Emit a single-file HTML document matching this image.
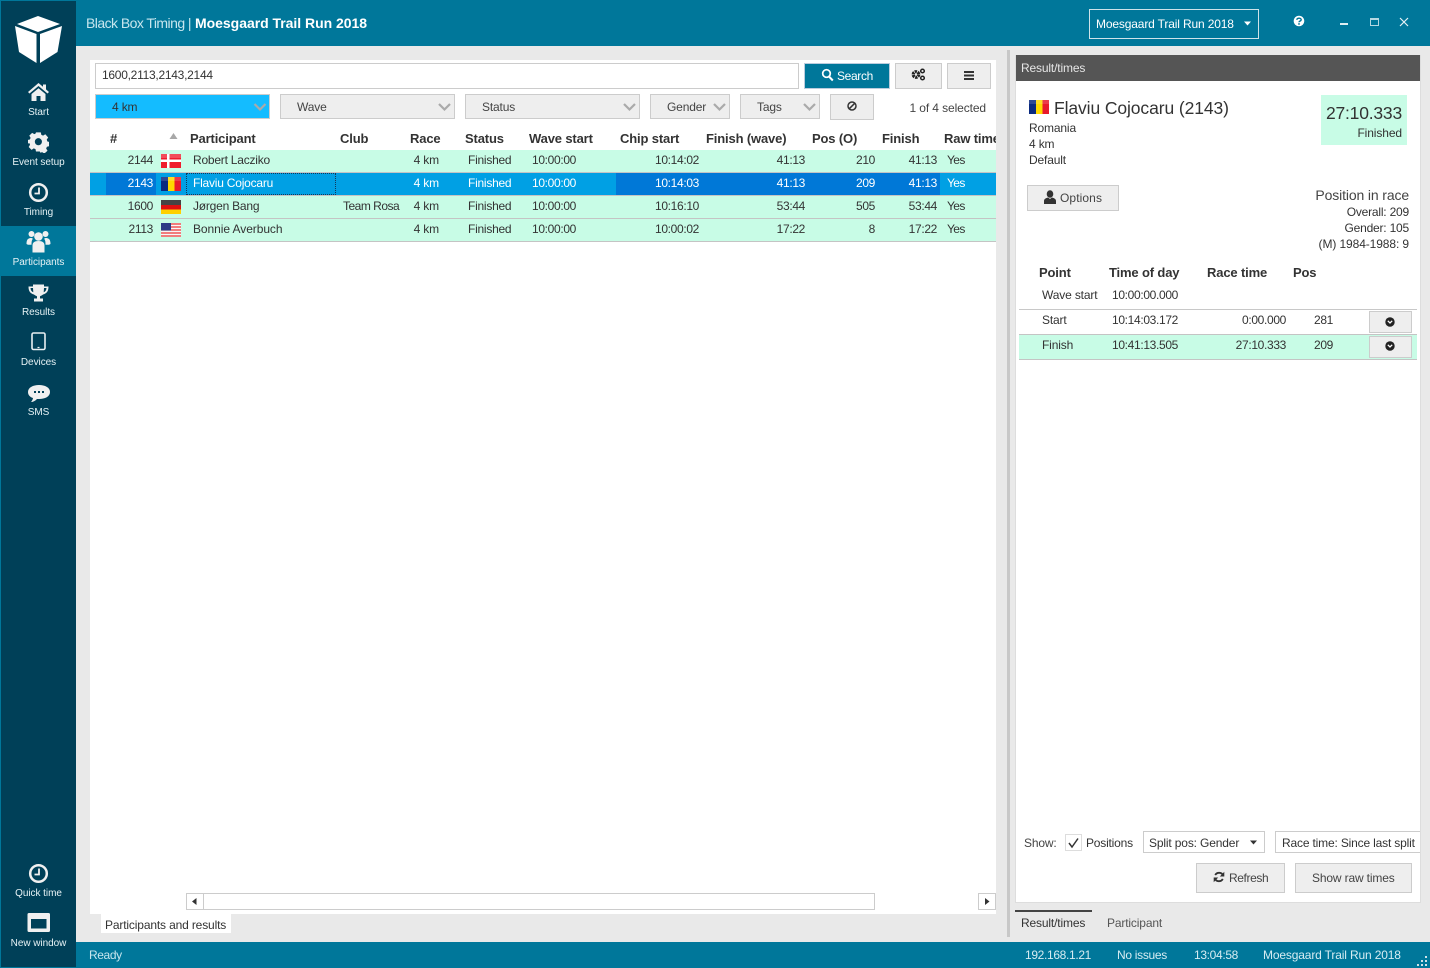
<!DOCTYPE html>
<html><head><meta charset="utf-8"><style>
html,body{margin:0;padding:0}
body{width:1430px;height:968px;position:relative;overflow:hidden;background:#e9e9e9;font:12px/16px "Liberation Sans",sans-serif;color:#333}
.b,.t,svg{position:absolute}
.t{white-space:nowrap;letter-spacing:-.15px}
.d{letter-spacing:-.34px}
.r{text-align:right}
.c{text-align:center;transform:translateX(-50%)}
.h{font-weight:bold;font-size:13px;color:#333;letter-spacing:-.15px}
.w{color:#fff}
.n{color:#e6f2f5;font-size:10px;letter-spacing:-.05px}
.btn{position:absolute;box-sizing:border-box;background:#eee;border:1px solid #ccc}
.row{position:absolute;left:90px;width:906px;height:22px;background:#c8fce6;border-bottom:1px solid #c4c4c4}
</style></head><body>
<!-- chrome -->
<div class="b" style="left:0;top:0;width:1430px;height:46px;background:#00779a"></div>
<div class="b" style="left:0;top:942px;width:1430px;height:26px;background:#00779a"></div>
<div class="b" style="left:0;top:0;width:76px;height:968px;background:#004058;border-left:1px solid #00779a;box-sizing:border-box;border-top:1px solid #00779a;border-bottom:1px solid #00779a"></div>
<div class="b" style="left:1px;top:226px;width:75px;height:50px;background:#00779a"></div>
<svg style="left:0;top:0" width="76" height="70"><path fill="#fff" d="M38 16L60 24 38 32 17 24ZM15 26L36.500 34V63L19 52ZM62 26L40 34V63L57.500 52Z"/></svg>
<!-- sidebar icons -->
<svg style="left:27px;top:82px" width="24" height="20" fill="#f0f0f0"><path d="M11.500 1L1 10l1.500 1.500L11.500 4l9 7.500L22 10l-3-2.600V2.500h-3V4.800ZM4.500 12V19h5v-5h4v5h5v-7l-7-5.800Z"/></svg>
<svg style="left:28px;top:132px" width="21" height="21" fill="#f0f0f0"><path fill-rule="evenodd" d="M8 1h5l.6 2.600 1.800.8L17.700 3l3 3.300-1.500 2.300.7 1.900 2.100.5v-.1 4.500l-2.600.6-.8 1.800 1.400 2.300-3.300 3-2.300-1.500-1.800.7L12 21H8l-.5-2.600-1.800-.7-2.300 1.500-3-3 1.400-2.300-.8-1.800L-1 13V9l2.600-.5.800-1.800L1 4.400 4 1.500l2.300 1.400 1.200-.6ZM10.500 7a3.700 3.700 0 1 0 .01 0Z" transform="translate(.3 -.6) scale(.96)"/></svg>
<svg style="left:28px;top:182px" width="21" height="21" fill="none" stroke="#f0f0f0"><circle cx="10.500" cy="10.500" r="8.300" stroke-width="2.500"/><path d="M11 5.500V11.500H6.500" stroke-width="1.800"/></svg>
<svg style="left:26px;top:230px" width="25" height="23" fill="#f0f0f0"><circle cx="5.500" cy="4" r="3"/><circle cx="19.500" cy="4" r="3"/><circle cx="12.500" cy="6.500" r="4.300"/><path d="M.5 14c0-5 2-6 5-6l1.500.8c-1 1-1.500 2-1.500 6H2ZM24.500 14c0-5-2-6-5-6l-1.500.8c1 1 1.500 2 1.500 6H23ZM6.500 22.500V15.500c0-3 2-4.500 6-4.500s6 1.500 6 4.500v7Z"/></svg>
<svg style="left:28px;top:284px" width="21" height="18" fill="#f0f0f0"><path d="M5 .5H16V2.500H20.500C20.500 7.500 18.500 9.500 15 10.500 14 11.500 12 12 12 12.500V14.500H15V17.500H6V14.500H9V12.500C9 12 7 11.500 6 10.500 2.500 9.500 .5 7.500 .5 2.500H5ZM2.500 4C2.600 6 3.500 7.500 5.300 8.300L5 4ZM18.500 4H16L15.700 8.300C17.500 7.500 18.400 6 18.500 4Z"/></svg>
<svg style="left:31px;top:332px" width="15" height="19" fill="none" stroke="#e8eff2"><rect x="1" y="1" width="13" height="16.500" rx="1.500" stroke-width="1.600"/><path d="M6.500 15.500h2" stroke-width="1.200"/></svg>
<svg style="left:27px;top:384px" width="24" height="20" fill="#f0f0f0"><path fill-rule="evenodd" d="M12 1C18 1 23 3.500 23 8s-5 7-11 7l-2 0c-2 2-4 3-6 3 1-1 2-3 2-4C3 13 1 11 1 8 1 3.500 6 1 12 1ZM7 7v2h2V7ZM11 7v2h2V7ZM15 7v2h2V7Z"/></svg>
<svg style="left:28px;top:863px" width="21" height="21" fill="none" stroke="#f0f0f0"><circle cx="10.500" cy="10.500" r="8.300" stroke-width="2.500"/><path d="M11 5.500V11.500H6.500" stroke-width="1.800"/></svg>
<svg style="left:27px;top:912px" width="24" height="21"><path fill="#f0f0f0" fill-rule="evenodd" d="M2 1H21.500Q23 1 23 2.500V18.500Q23 20 21.500 20H2Q.5 20 .5 18.500V2.500Q.5 1 2 1ZM4 7V16.500H19.500V7Z"/></svg>
<div class="t n c" style="left:38.500px;top:105px">Start</div>
<div class="t n c" style="left:38.500px;top:155px">Event setup</div>
<div class="t n c" style="left:38.500px;top:205px">Timing</div>
<div class="t n c" style="left:38.500px;top:255px">Participants</div>
<div class="t n c" style="left:38.500px;top:305px">Results</div>
<div class="t n c" style="left:38.500px;top:355px">Devices</div>
<div class="t n c" style="left:38.500px;top:405px">SMS</div>
<div class="t n c" style="left:38.500px;top:886px">Quick time</div>
<div class="t n c" style="left:38.500px;top:936px">New window</div>
<!-- title -->
<div class="t" style="left:86px;top:15px;font-size:14px;color:#c6e6ee;letter-spacing:-.55px">Black Box Timing |</div>
<div class="t w" style="left:195px;top:15px;font-size:14px;font-weight:bold;letter-spacing:-.03px">Moesgaard Trail Run 2018</div>
<div class="b" style="left:1089px;top:9px;width:170px;height:30px;box-sizing:border-box;border:1px solid #cfe3e9"></div>
<div class="t w" style="left:1096px;top:16px">Moesgaard Trail Run 2018</div>
<svg style="left:1243px;top:21px" width="9" height="6"><path fill="#fff" d="M1 .500H8L4.500 4.500Z"/></svg>
<svg style="left:1293px;top:15px" width="12" height="12"><circle cx="6" cy="6" r="5.300" fill="#fff"/><path d="M3.800 4.800C4 2.700 8.200 2.700 8.200 4.700 8.200 6 6 6 6 7.300" fill="none" stroke="#00779a" stroke-width="1.400"/><rect x="5.200" y="8.200" width="1.600" height="1.500" fill="#00779a"/></svg>
<div class="b" style="left:1340px;top:23px;width:8px;height:2px;background:#dfeef2"></div>
<div class="b" style="left:1370px;top:18px;width:7px;height:5px;border:1px solid #b6d8e2;border-top-width:2px"></div>
<svg style="left:1399px;top:17px" width="10" height="10"><path d="M1 1L9 9M9 1L1 9" stroke="#e6f2f5" stroke-width="1.200"/></svg>
<!-- left pane -->
<div class="b" style="left:90px;top:60px;width:906px;height:854px;background:#fff"></div>
<div class="b" style="left:95px;top:63px;width:704px;height:26px;box-sizing:border-box;border:1px solid #ccc;background:#fff"></div>
<div class="t d" style="left:102px;top:67px;letter-spacing:-.27px">1600,2113,2143,2144</div>
<div class="b" style="left:804px;top:63px;width:86px;height:26px;background:#00779a;box-sizing:border-box;border:1px solid #bcd"></div>
<svg style="left:821px;top:68px" width="13" height="14" fill="none" stroke="#fff"><circle cx="5.500" cy="5.500" r="3.800" stroke-width="1.700"/><path d="M8 8.500L11.800 12.500" stroke-width="2"/></svg>
<div class="t w" style="left:837px;top:68px;letter-spacing:-.35px">Search</div>
<div class="btn" style="left:895px;top:63px;width:47px;height:26px"></div>
<svg style="left:911px;top:68px" width="15" height="13" fill="#333"><circle cx="5" cy="6.500" r="2.800" fill="none" stroke="#222" stroke-width="3.200" stroke-dasharray="2.200 .7"/><circle cx="11.500" cy="3" r="1.800" fill="none" stroke="#222" stroke-width="1.500"/><circle cx="11.500" cy="10" r="1.800" fill="none" stroke="#222" stroke-width="1.500"/></svg>
<div class="btn" style="left:947px;top:63px;width:44px;height:26px"></div>
<svg style="left:963px;top:71px" width="12" height="9" fill="#333"><rect x="1" y="0" width="10" height="2"/><rect x="1" y="3.500" width="10" height="2"/><rect x="1" y="7" width="10" height="2"/></svg>
<!-- filters -->
<div class="btn" style="left:95px;top:94px;width:175px;height:25px;background:#14bcff"></div>
<div class="t" style="left:112px;top:99px">4 km</div>
<div class="btn" style="left:280px;top:94px;width:175px;height:25px"></div>
<div class="t" style="left:297px;top:99px;color:#444">Wave</div>
<div class="btn" style="left:465px;top:94px;width:175px;height:25px"></div>
<div class="t" style="left:482px;top:99px;color:#444">Status</div>
<div class="btn" style="left:650px;top:94px;width:80px;height:25px"></div>
<div class="t" style="left:667px;top:99px;color:#444">Gender</div>
<div class="btn" style="left:740px;top:94px;width:80px;height:25px"></div>
<div class="t" style="left:757px;top:99px;color:#444">Tags</div>
<svg style="left:0;top:0" width="1000" height="130" fill="none" stroke="#aaa" stroke-width="2.200"><path d="M254.500 104l5.500 5.500 5.500-5.500M439 104l5.500 5.500 5.500-5.500M624 104l5.500 5.500 5.500-5.500M714 104l5.500 5.500 5.500-5.500M804 104l5.500 5.500 5.500-5.500"/></svg>
<div class="btn" style="left:830px;top:94px;width:44px;height:26px"></div>
<svg style="left:846px;top:100px" width="12" height="12" fill="none" stroke="#333" stroke-width="1.500"><circle cx="6" cy="6" r="4"/><path d="M3.200 8.800L8.800 3.200"/></svg>
<div class="t r" style="right:444px;top:100px;color:#444;letter-spacing:-.1px">1 of 4 selected</div>
<!-- table header -->
<div class="t h" style="left:110px;top:131px">#</div>
<svg style="left:169px;top:133px" width="9" height="6"><path fill="#a8a8a8" d="M4.500 0L8.500 6H.5Z"/></svg>
<div class="t h" style="left:190px;top:131px">Participant</div>
<div class="t h" style="left:340px;top:131px">Club</div>
<div class="t h" style="left:410px;top:131px">Race</div>
<div class="t h" style="left:465px;top:131px">Status</div>
<div class="t h" style="left:529px;top:131px">Wave start</div>
<div class="t h" style="left:620px;top:131px">Chip start</div>
<div class="t h" style="left:706px;top:131px">Finish (wave)</div>
<div class="t h" style="left:812px;top:131px">Pos (O)</div>
<div class="t h" style="left:882px;top:131px">Finish</div>
<div class="b" style="left:944px;top:131px;width:52px;height:16px;overflow:hidden"><span class="t h" style="left:0;top:0">Raw time</span></div>
<!-- rows -->
<div class="row" style="top:150px"></div>
<div class="row" style="top:173px;background:#00a0e4"></div>
<div class="row" style="top:196px"></div>
<div class="row" style="top:219px"></div>
<div class="b" style="left:106px;top:173px;width:50px;height:22px;background:#0078d7"></div>
<div class="b" style="left:616px;top:173px;width:324px;height:22px;background:#0078d7"></div>
<div class="b" style="left:186px;top:173px;width:150px;height:22px;box-sizing:border-box;border:1px dotted #12395a"></div>
<!-- flags -->
<svg style="left:161px;top:154px" width="20" height="14"><rect width="20" height="14" fill="#ef1c2c"/><rect x="6" width="2.500" height="14" fill="#fff"/><rect y="5.500" width="20" height="2.500" fill="#fff"/><rect width="20" height="4" fill="#fff" opacity=".22"/></svg>
<svg style="left:161px;top:177px" width="20" height="14"><rect width="7" height="14" fill="#0a2a80"/><rect x="7" width="6.500" height="14" fill="#ffd800"/><rect x="13.500" width="6.500" height="14" fill="#e8192c"/><rect width="20" height="4" fill="#fff" opacity=".15"/></svg>
<svg style="left:161px;top:200px" width="20" height="14"><rect width="20" height="5" fill="#444"/><rect y="5" width="20" height="4.500" fill="#dd1010"/><rect y="9.500" width="20" height="4.500" fill="#ffd000"/></svg>
<svg style="left:161px;top:223px" width="20" height="14"><rect width="20" height="14" fill="#f6f6f6"/><path d="M0 1h20M0 4h20M0 7h20M0 10h20M0 13h20" stroke="#e33" stroke-width="1.300"/><rect width="10" height="7.500" fill="#2c3a86"/></svg>
<!-- row 1 -->
<div class="t d r" style="right:1277px;top:152px">2144</div>
<div class="t" style="left:193px;top:152px;letter-spacing:-.22px">Robert Lacziko</div>
<div class="t r" style="right:991px;top:152px">4 km</div>
<div class="t" style="left:468px;top:152px;letter-spacing:-.25px">Finished</div>
<div class="t d" style="left:532px;top:152px">10:00:00</div>
<div class="t d r" style="right:731px;top:152px">10:14:02</div>
<div class="t d r" style="right:625px;top:152px">41:13</div>
<div class="t d r" style="right:555px;top:152px">210</div>
<div class="t d r" style="right:493px;top:152px">41:13</div>
<div class="t" style="left:947px;top:152px;letter-spacing:-.6px">Yes</div>
<!-- row 2 -->
<div class="t d r w" style="right:1277px;top:175px">2143</div>
<div class="t w" style="left:193px;top:175px;letter-spacing:-.22px">Flaviu Cojocaru</div>
<div class="t r w" style="right:991px;top:175px">4 km</div>
<div class="t w" style="left:468px;top:175px;letter-spacing:-.25px">Finished</div>
<div class="t d w" style="left:532px;top:175px">10:00:00</div>
<div class="t d r w" style="right:731px;top:175px">10:14:03</div>
<div class="t d r w" style="right:625px;top:175px">41:13</div>
<div class="t d r w" style="right:555px;top:175px">209</div>
<div class="t d r w" style="right:493px;top:175px">41:13</div>
<div class="t w" style="left:947px;top:175px;letter-spacing:-.6px">Yes</div>
<!-- row 3 -->
<div class="t d r" style="right:1277px;top:198px">1600</div>
<div class="t" style="left:193px;top:198px;letter-spacing:-.22px">Jørgen Bang</div>
<div class="t" style="left:343px;top:198px;letter-spacing:-.5px">Team Rosa</div>
<div class="t r" style="right:991px;top:198px">4 km</div>
<div class="t" style="left:468px;top:198px;letter-spacing:-.25px">Finished</div>
<div class="t d" style="left:532px;top:198px">10:00:00</div>
<div class="t d r" style="right:731px;top:198px">10:16:10</div>
<div class="t d r" style="right:625px;top:198px">53:44</div>
<div class="t d r" style="right:555px;top:198px">505</div>
<div class="t d r" style="right:493px;top:198px">53:44</div>
<div class="t" style="left:947px;top:198px;letter-spacing:-.6px">Yes</div>
<!-- row 4 -->
<div class="t d r" style="right:1277px;top:221px">2113</div>
<div class="t" style="left:193px;top:221px;letter-spacing:-.07px">Bonnie Averbuch</div>
<div class="t r" style="right:991px;top:221px">4 km</div>
<div class="t" style="left:468px;top:221px;letter-spacing:-.25px">Finished</div>
<div class="t d" style="left:532px;top:221px">10:00:00</div>
<div class="t d r" style="right:731px;top:221px">10:00:02</div>
<div class="t d r" style="right:625px;top:221px">17:22</div>
<div class="t d r" style="right:555px;top:221px">8</div>
<div class="t d r" style="right:493px;top:221px">17:22</div>
<div class="t" style="left:947px;top:221px;letter-spacing:-.6px">Yes</div>
<!-- scrollbar -->
<div class="b" style="left:186px;top:893px;width:689px;height:17px;box-sizing:border-box;border:1px solid #ccc"></div>
<div class="b" style="left:203px;top:893px;width:1px;height:17px;background:#ccc"></div>
<svg style="left:192px;top:898px" width="6" height="8"><path fill="#333" d="M4.500 0V7L0 3.500Z"/></svg>
<div class="b" style="left:978px;top:893px;width:18px;height:17px;box-sizing:border-box;border:1px solid #ccc"></div>
<svg style="left:985px;top:898px" width="6" height="8"><path fill="#333" d="M0 0V7L4.500 3.500Z"/></svg>
<div class="b" style="left:101px;top:914px;width:130px;height:19px;background:#fff"></div>
<div class="t" style="left:105px;top:917px">Participants and results</div>
<!-- splitter -->
<div class="b" style="left:1007px;top:50px;width:3px;height:887px;background:#c8c8c8"></div>
<!-- right pane -->
<div class="b" style="left:1015px;top:55px;width:406px;height:848px;box-sizing:border-box;background:#fff;border:1px solid #ddd"></div>
<div class="b" style="left:1016px;top:55px;width:404px;height:26px;background:#555"></div>
<div class="t" style="left:1021px;top:60px;color:#e6e6e6">Result/times</div>
<svg style="left:1029px;top:100px" width="20" height="14"><rect width="7" height="14" fill="#0a2a80"/><rect x="7" width="6.500" height="14" fill="#ffd800"/><rect x="13.500" width="6.500" height="14" fill="#e8192c"/><rect width="20" height="4" fill="#fff" opacity=".15"/></svg>
<div class="t" style="left:1054px;top:97px;font-size:17.500px;line-height:22px;color:#333;letter-spacing:-.1px">Flaviu Cojocaru (2143)</div>
<div class="t" style="left:1029px;top:120px">Romania</div>
<div class="t" style="left:1029px;top:136px">4 km</div>
<div class="t" style="left:1029px;top:152px">Default</div>
<div class="b" style="left:1321px;top:95px;width:86px;height:50px;background:#c8fce6"></div>
<div class="t r" style="right:28px;top:102px;font-size:17.500px;line-height:22px;letter-spacing:-.2px">27:10.333</div>
<div class="t r" style="right:28px;top:125px;letter-spacing:-.1px">Finished</div>
<div class="btn" style="left:1027px;top:185px;width:92px;height:26px"></div>
<svg style="left:1044px;top:190px" width="12" height="15" fill="#333"><ellipse cx="6" cy="4" rx="3.300" ry="3.800"/><path d="M0 14V11C0 9 2 8 4 7.500L6 9 8 7.500C10 8 12 9 12 11V14Z"/></svg>
<div class="t" style="left:1060px;top:190px;color:#444;letter-spacing:.1px">Options</div>
<div class="t r" style="right:21px;top:187px;font-size:14px;color:#444;letter-spacing:-.13px">Position in race</div>
<div class="t r" style="right:21px;top:204px;letter-spacing:-.2px">Overall: 209</div>
<div class="t r" style="right:21px;top:220px;letter-spacing:-.2px">Gender: 105</div>
<div class="t r" style="right:21px;top:236px;letter-spacing:-.1px">(M) 1984-1988: 9</div>
<!-- splits -->
<div class="t h" style="left:1039px;top:265px">Point</div>
<div class="t h" style="left:1109px;top:265px">Time of day</div>
<div class="t h" style="left:1207px;top:265px">Race time</div>
<div class="t h" style="left:1293px;top:265px">Pos</div>
<div class="t" style="left:1042px;top:287px">Wave start</div>
<div class="t d" style="left:1112px;top:287px">10:00:00.000</div>
<div class="b" style="left:1019px;top:309px;width:398px;height:1px;background:#c8c8c8"></div>
<div class="t" style="left:1042px;top:312px">Start</div>
<div class="t d" style="left:1112px;top:312px">10:14:03.172</div>
<div class="t d r" style="right:144px;top:312px">0:00.000</div>
<div class="t d" style="left:1314px;top:312px">281</div>
<div class="b" style="left:1019px;top:334px;width:398px;height:26px;box-sizing:border-box;background:#c8fce6;border-top:1px solid #c4c4c4;border-bottom:1px solid #c4c4c4"></div>
<div class="t" style="left:1042px;top:337px">Finish</div>
<div class="t d" style="left:1112px;top:337px">10:41:13.505</div>
<div class="t d r" style="right:144px;top:337px">27:10.333</div>
<div class="t d" style="left:1314px;top:337px">209</div>
<div class="btn" style="left:1369px;top:311px;width:43px;height:22px"></div>
<div class="btn" style="left:1369px;top:336px;width:43px;height:22px"></div>
<svg style="left:1385px;top:317px" width="10" height="10"><circle cx="5" cy="5" r="4.700" fill="#222"/><path d="M2.800 3.800L5 6 7.200 3.800" fill="none" stroke="#fff" stroke-width="1.300"/></svg>
<svg style="left:1385px;top:341px" width="10" height="10"><circle cx="5" cy="5" r="4.700" fill="#222"/><path d="M2.800 3.800L5 6 7.200 3.800" fill="none" stroke="#fff" stroke-width="1.300"/></svg>
<!-- bottom controls -->
<div class="t" style="left:1024px;top:835px;color:#444">Show:</div>
<div class="b" style="left:1065px;top:834px;width:17px;height:17px;box-sizing:border-box;border:1px solid #ddd;background:#fff"></div>
<svg style="left:1067px;top:837px" width="13" height="12"><path d="M2 6L5 10 11 1.500" fill="none" stroke="#333" stroke-width="1.500"/></svg>
<div class="t" style="left:1086px;top:835px;letter-spacing:-.2px">Positions</div>
<div class="b" style="left:1143px;top:831px;width:122px;height:22px;box-sizing:border-box;border:1px solid #ccc"></div>
<div class="t" style="left:1149px;top:835px">Split pos: Gender</div>
<svg style="left:1249px;top:840px" width="9" height="6"><path fill="#333" d="M1 .500H8L4.500 4.500Z"/></svg>
<div class="b" style="left:1275px;top:831px;width:145px;height:22px;box-sizing:border-box;border:1px solid #ccc;border-right:0"></div>
<div class="t" style="left:1282px;top:835px;letter-spacing:-.17px">Race time: Since last split</div>
<div class="btn" style="left:1196px;top:863px;width:89px;height:30px"></div>
<svg style="left:1213px;top:871px" width="12" height="12" fill="none" stroke="#333" stroke-width="1.800"><path d="M10.200 4.500A4.500 4.500 0 0 0 2.200 4M1.800 7.500A4.500 4.500 0 0 0 9.800 8"/><path fill="#333" stroke="none" d="M11.300 .8V5.500H6.800ZM.7 11.200V6.500H5.200Z"/></svg>
<div class="t" style="left:1229px;top:870px;color:#444;letter-spacing:-.4px">Refresh</div>
<div class="btn" style="left:1295px;top:863px;width:117px;height:30px"></div>
<div class="t" style="left:1312px;top:870px;color:#444">Show raw times</div>
<!-- tabs -->
<div class="b" style="left:1015px;top:910px;width:77px;height:2px;background:#444"></div>
<div class="t" style="left:1021px;top:915px">Result/times</div>
<div class="t" style="left:1107px;top:915px;color:#555">Participant</div>
<!-- status -->
<div class="t" style="left:89px;top:947px;color:#c6e6ee;letter-spacing:-.4px">Ready</div>
<div class="t d" style="left:1025px;top:947px;color:#d6ecf2">192.168.1.21</div>
<div class="t" style="left:1117px;top:947px;color:#d6ecf2;letter-spacing:-.3px">No issues</div>
<div class="t d" style="left:1194px;top:947px;color:#d6ecf2">13:04:58</div>
<div class="t" style="left:1263px;top:947px;color:#d6ecf2">Moesgaard Trail Run 2018</div>
<svg style="left:1417px;top:955px" width="12" height="12" fill="#cfe3e9"><rect x="8" y="1" width="2" height="2"/><rect x="4" y="5" width="2" height="2"/><rect x="8" y="5" width="2" height="2"/><rect x="0" y="9" width="2" height="2"/><rect x="4" y="9" width="2" height="2"/><rect x="8" y="9" width="2" height="2"/></svg>
</body></html>
